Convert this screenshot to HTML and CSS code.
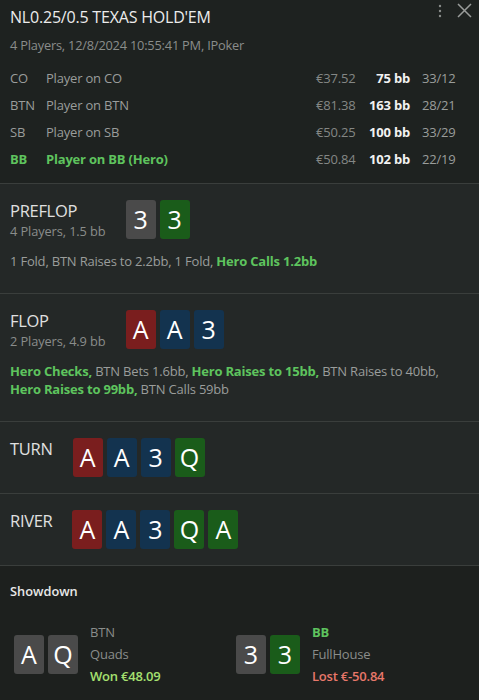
FILE: index.html
```html
<!DOCTYPE html>
<html>
<head>
<meta charset="utf-8">
<link rel="stylesheet" href="styles.css">
</head>
<body>
<div class="app">
  <header class="head">
    <div class="title-row">
      <h1 class="title">NL0.25/0.5 TEXAS HOLD'EM</h1>
      <div class="icons">
        <svg class="dots" width="4" height="14" viewBox="0 0 4 14"><circle cx="2" cy="2" r="1.2"/><circle cx="2" cy="7" r="1.2"/><circle cx="2" cy="12" r="1.2"/></svg>
        <svg class="close" width="15" height="15" viewBox="0 0 15 15"><path d="M1 1L14 14M14 1L1 14"/></svg>
      </div>
    </div>
    <div class="sub">4 Players, 12/8/2024 10:55:41 PM, IPoker</div>
    <div class="players">
      <div class="prow"><span class="pos">CO</span><span class="name">Player on CO</span><span class="money">€37.52</span><span class="bb">75 bb</span><span class="stat">33/12</span></div>
      <div class="prow"><span class="pos">BTN</span><span class="name">Player on BTN</span><span class="money">€81.38</span><span class="bb">163 bb</span><span class="stat">28/21</span></div>
      <div class="prow"><span class="pos">SB</span><span class="name">Player on SB</span><span class="money">€50.25</span><span class="bb">100 bb</span><span class="stat">33/29</span></div>
      <div class="prow hero"><span class="pos">BB</span><span class="name">Player on BB (Hero)</span><span class="money">€50.84</span><span class="bb">102 bb</span><span class="stat">22/19</span></div>
    </div>
  </header>

  <section class="street">
    <div class="street-top">
      <div class="label"><div class="sname">PREFLOP</div><div class="sinfo">4 Players, 1.5 bb</div></div>
      <div class="cards"><span class="card gray">3</span><span class="card green">3</span></div>
    </div>
    <p class="actions">1 Fold, BTN Raises to 2.2bb, 1 Fold, <b class="h">Hero Calls 1.2bb</b></p>
  </section>

  <section class="street">
    <div class="street-top">
      <div class="label"><div class="sname">FLOP</div><div class="sinfo">2 Players, 4.9 bb</div></div>
      <div class="cards"><span class="card red">A</span><span class="card blue">A</span><span class="card blue">3</span></div>
    </div>
    <p class="actions"><b class="h">Hero Checks,</b> BTN Bets 1.6bb, <b class="h">Hero Raises to 15bb,</b> BTN Raises to 40bb, <b class="h">Hero Raises to 99bb,</b> BTN Calls 59bb</p>
  </section>

  <section class="street short">
    <div class="street-top">
      <div class="label"><div class="sname">TURN</div></div>
      <div class="cards"><span class="card red">A</span><span class="card blue">A</span><span class="card blue">3</span><span class="card green">Q</span></div>
    </div>
  </section>

  <section class="street short">
    <div class="street-top">
      <div class="label"><div class="sname">RIVER</div></div>
      <div class="cards"><span class="card red">A</span><span class="card blue">A</span><span class="card blue">3</span><span class="card green">Q</span><span class="card green">A</span></div>
    </div>
  </section>

  <section class="showdown">
    <div class="sd-title">Showdown</div>
    <div class="hands">
      <div class="hand">
        <div class="cards"><span class="card gray">A</span><span class="card gray">Q</span></div>
        <div class="hinfo"><div class="hpos">BTN</div><div class="hrank">Quads</div><div class="won">Won €48.09</div></div>
      </div>
      <div class="hand">
        <div class="cards"><span class="card gray">3</span><span class="card green">3</span></div>
        <div class="hinfo"><div class="hpos herop">BB</div><div class="hrank">FullHouse</div><div class="lost">Lost €-50.84</div></div>
      </div>
    </div>
  </section>
</div>
</body>
</html>
```

FILE: styles.css
```css
* { box-sizing: border-box; }
html, body { margin: 0; padding: 0; background: #1d201e; }
body { font-family: "Open Sans", "Noto Sans", sans-serif; color: #a0a0a0; }
.app { width: 479px; height: 700px; overflow: hidden; display: flex; flex-direction: column; }

.head { background: #1e2220; padding: 5px 10px 11px 10px; border-bottom: 1px solid #3a3e3c; }
.title-row { display: flex; justify-content: space-between; align-items: flex-start; }
.title { margin: 0; font-size: 16px; font-weight: 400; color: #ececec; line-height: 24px; letter-spacing: -0.2px; }
.icons { display: flex; align-items: center; gap: 15px; margin-top: -2px; margin-right: -3px; }
.dots { fill: #8a8d8b; }
.close { stroke: #9a9d9b; stroke-width: 1.5; fill: none; }
.sub { font-size: 12.8px; color: #8a8d8b; line-height: 18px; margin-top: 7px; letter-spacing: -0.2px; }

.players { margin-top: 10px; }
.prow { display: grid; grid-template-columns: 36px 1fr 52px 42px 59px; height: 27px; align-items: center; font-size: 13px; letter-spacing: -0.2px; }
.pos, .name, .stat { color: #9a9d9b; }
.money { color: #848785; }
.bb { color: #f2f2f2; font-weight: 700; text-align: right; }
.stat { padding-left: 12px; }
.prow.hero .pos, .prow.hero .name { color: #5ec45e; font-weight: 700; }

.street { background: #242827; border-bottom: 1px solid #3a3e3c; padding: 16px 10px 23px 10px; }
.street.short { padding-bottom: 16px; }
.street-top { display: flex; align-items: flex-start; gap: 20px; }
.sname { font-size: 16.5px; color: #e0e0e0; line-height: 22px; letter-spacing: -0.3px; }
.sinfo { font-size: 12.8px; color: #8a8d8b; line-height: 18px; letter-spacing: -0.1px; }
.cards { display: flex; gap: 4px; }
.card { width: 30px; height: 39px; border-radius: 3px; display: flex; align-items: center; justify-content: center; color: #fff; font-size: 25px; line-height: 1; font-family: "Open Sans", sans-serif; }
.card.gray { background: #4a4a4a; }
.card.green { background: #1a5c1a; }
.card.red { background: #7a1e1e; }
.card.blue { background: #13334f; }

.actions { margin: 12px 0 0 0; font-size: 13px; line-height: 18px; color: #9a9d9b; letter-spacing: -0.2px; }
.h { color: #5ec45e; font-weight: 700; white-space: nowrap; }

.showdown { flex: 1; background: #1d201e; padding: 15px 10px 0 10px; }
.sd-title { font-size: 12.8px; font-weight: 600; color: #e8e8e8; line-height: 20px; }
.hands { display: grid; grid-template-columns: 222px 1fr; margin-top: 20px; padding-left: 4px; }
.hand { display: flex; align-items: center; gap: 12px; }
.hinfo { font-size: 13px; line-height: 22px; letter-spacing: -0.2px; }
.hpos, .hrank { color: #8a8d8b; }
.herop { color: #5ec45e; font-weight: 700; }
.won { color: #a6e070; font-weight: 600; }
.lost { color: #e8776a; font-weight: 600; }
```
